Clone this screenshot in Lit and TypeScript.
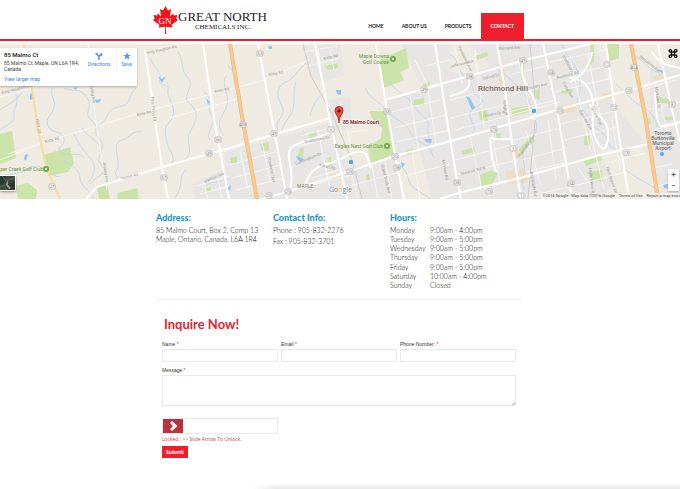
import { LitElement, html, svg, css } from "lit";
import { customElement } from "lit/decorators.js";

type Label = [x: number, y: number, angle: number, text: string];
type Shield = [x: number, y: number, text: string];

const URBAN = [
  "M302 46 340 44 344 76 322 82 308 74Z",
  "M225 152 275 138 330 122 348 168 395 158 402 199 225 199Z",
  "M327 100 350 96 352 128 334 132Z",
  "M385 100 455 82 455 142 396 156Z",
  "M400 44 600 44 616 108 648 145 648 160 628 168 600 199 402 199 396 156 455 142 450 84 420 82Z",
  "M192 184 230 166 230 199 196 199Z",
  "M650 70 680 62 680 199 656 199 648 140Z",
];
const RURAL = [
  "M596 44 630 44 642 100 612 96Z",
  "M600 150 646 146 655 199 618 199Z",
  "M395 160 420 152 432 199 404 199Z",
  "M450 44 470 44 490 66 470 74 450 72Z",
];
const SAND = [
  "M497 64 503 63 506 86 500 88Z",
  "M556 106 578 102 574 112 554 114Z",
  "M505 172 524 168 528 182 508 184Z",
  "M653 76 663 74 664 80 654 81Z",
  "M602 94 614 92 614 98 602 99Z",
  "M510 150 518 148 520 158 513 158Z",
  "M329 175 337 174 338 179 331 180Z",
];
const PARKS = [
  "M0 134 12 131 16 158 0 164Z",
  "M44 155 70 147 74 164 68 172 48 176Z",
  "M97 187 107 184 110 199 99 199Z",
  "M118 193 137 188 139 199 117 199Z",
  "M16 186 28 183 37 190 36 199 18 199Z",
  "M379 60 406 48 409 68 400 72 404 80 384 88Z",
  "M369 111 387 111 394 154 371 164 368 147 381 138 382 128 374 122Z",
  "M606 44 619 44 619 58 608 62Z",
  "M480 175 492 170 498 174 492 184 482 190Z",
  "M530 136 536 140 526 148 522 156 519 150Z",
  "M511 108 528 106 529 112 513 116Z",
  "M478 112 487 110 488 121 480 120Z",
  "M535 91 540 89 539 101 536 98Z",
  "M583 161 600 155 602 160 586 166Z",
  "M584 136 590 136 590 146 584 145Z",
  "M587 172 602 170 603 182 592 180Z",
  "M656 96 671 100 670 104 657 102Z",
  "M664 117 674 116 673 120 665 120Z",
  "M300 148 304 147 303 158 297 157Z",
  "M308 134 316 131 317 136 309 137Z",
  "M260 144 269 142 269 150 262 151Z",
  "M230 158 237 156 237 164 231 163Z",
  "M325 66 338 63 338 68 328 70Z",
  "M327 158 331 157 332 166 328 165Z",
  "M413 100 424 98 424 105 415 105Z",
  "M423 84 430 82 430 90 425 90Z",
  "M405 151 413 148 413 154 407 155Z",
  "M366 175 369 174 370 180 366 180Z",
  "M206 188 211 187 211 192 206 193Z",
  "M461 151 474 147 475 152 463 155Z",
  "M496 133 502 133 500 139 496 137Z",
  "M590 46 594 44 594 62 584 72 585 67 591 61Z",
  "M520 64 524 64 524 80 521 80Z",
  "M475 56 487 52 488 56 477 60Z",
  "M560 90 572 88 573 92 562 94Z",
  "M644 120 650 118 651 124 645 125Z",
];
const STREAMS = [
  "M52 88C50 96 56 100 54 108S44 118 48 126 62 130 64 138 56 146 60 152 80 150 84 158",
  "M0 110C8 104 16 102 22 92M16 94C20 104 12 110 14 116S4 126 0 130",
  "M64 88C72 92 78 88 84 94S90 104 88 112 98 122 96 130 104 138 102 148 96 158 102 166 96 176 90 184",
  "M136 88C128 94 132 104 122 106S110 110 106 118 98 122 97 130",
  "M82 128C86 136 94 138 100 146M74 134C78 142 84 152 90 158S96 176 88 182",
  "M141 132C132 130 130 138 122 140S116 150 118 160 112 172 118 178",
  "M150 58C154 68 162 72 160 80S170 82 168 90 178 108 172 118 164 124 166 138 176 154 172 164",
  "M178 52C184 60 180 70 188 78S180 96 190 104 196 122 190 132 196 152 184 160",
  "M204 92C214 98 206 108 212 116S204 132 210 140",
  "M226 76C220 86 232 96 226 108S216 124 224 136M228 66C238 72 232 86 240 96",
  "M310 60C300 66 296 78 286 82S276 96 282 106 272 122 278 130",
  "M296 82C292 92 296 104 292 112S284 122 282 130M326 92C318 96 312 106 310 116",
  "M366 88C368 98 378 100 384 108S396 118 404 124 408 136 420 142 430 150 434 158",
  "M388 82C398 92 410 98 416 108S430 118 428 128 436 142 426 146",
  "M450 54C460 60 456 70 466 78S470 92 480 98 468 106 470 116 478 126 472 134",
  "M498 70C508 76 516 84 524 94S530 106 534 116 538 130 530 142 522 152 524 164 520 178 524 190",
  "M562 44C566 56 572 60 576 68S582 90 578 98 586 110 590 120 604 130 608 142 626 150 634 158",
  "M616 84C626 92 632 102 644 108S656 126 660 130M630 52C644 60 648 70 662 74",
  "M626 170C634 176 640 180 648 184S658 192 662 199M0 178C8 172 18 176 30 168S52 180 60 176",
  "M400 166C410 172 406 182 414 188S424 194 430 199M62 160C72 166 80 170 80 178S90 190 94 199",
  "M186 170C178 176 184 188 174 199M226 178C220 184 212 180 206 186",
];
const PONDS = [
  "M158 76 162 79 166 76 162 83Z",
  "M336 90 341 90 341 95 337 94Z",
  "M30 94 33 93 33 99 30 100Z",
  "M73 88 77 87 76 90Z",
  "M95 100 101 99 100 102 96 103Z",
  "M466 96 470 98 475 108 472 110Z",
  "M296 156 304 159 301 162 298 160Z",
  "M424 139 432 139 431 143 426 142Z",
  "M206 98 210 102 208 105Z",
  "M268 46 272 46 272 49 269 49Z",
  "M228 186 231 185 230 191 228 190Z",
  "M658 70 665 70 664 74Z",
  "M663 184 668 184 668 188 664 188Z",
  "M25 155 28 154 26 161 24 159Z",
  "M401 162 405 164 402 168Z",
];
const LANES = [
  "M0 97C40 86 100 66 145 52L178 44M0 160 45 142 140 113 258 82 310 60",
  "M88 44 92 88 97 130 107 190M170 118 240 98M0 60 24 54M45 142 8 154",
  "M303 52 338 46M308 66 340 58M318 48 322 78M330 50 334 70",
  "M230 165 275 152M232 178 280 165M236 190 284 178M240 150 248 190M262 142 270 180",
  "M300 136 330 128M296 146 334 138M312 178 345 168M318 130 330 190M308 186 352 175",
  "M352 175 358 199M372 165 378 199M350 186 400 172M385 160 392 199M412 152 420 199M404 176 450 164",
  "M392 112 440 100M394 128 446 115M410 94 418 148M428 90 436 144M396 142 450 130",
  "M415 60 430 90M425 66 450 60M455 48 462 84M475 50 484 128M450 100 505 86M450 118 508 104M455 130 560 102",
  "M455 160 515 144M458 174 518 160M470 136 482 190M492 130 500 184M506 96 550 84M508 112 556 100",
  "M512 74 546 66M518 58 532 120M526 130 540 184M514 140 560 128M522 160 566 148M526 172 568 162M548 120 556 180",
  "M550 62 606 50M553 78 608 66M555 92 612 78M570 56 590 150M588 54 600 118M560 124 618 110M564 140 622 126",
  "M578 168 600 199M574 186 626 172M590 130 604 190M612 120 620 170M610 162 645 153M530 196 572 186",
  "M640 90 676 80M648 110 680 102M652 130 680 124M655 84 668 134M654 168 672 164M658 186 680 180",
  "M196 186 230 176M200 194 230 186M204 182 208 199M218 178 222 199M350 132 368 130M340 102 352 150",
];
const ROADS = [
  "M145 50 155 120 162 167 168 199",
  "M203 44 215 125 220 150 229 199",
  "M86 199 97 187 110 183 162 167 230 148 275 134 330 118",
  "M258 44 275 135 287 199",
  "M315 44 331 125 347 199",
  "M376 44 387 110 395 155 404 199",
  "M385 100 455 80 525 60 590 44",
  "M262 199 290 191 350 171 395 156 455 140 560 109 630 90 680 75",
  "M435 44 447 120 457 180 461 199",
  "M497 44 505 90 513 150 521 199",
  "M543 44 557 110 572 199",
  "M606 44 615 110 629 199",
  "M658 44 672 110 680 142",
  "M440 199 458 193 520 178 600 155 648 144",
  "M450 96C468 92 472 86 468 78M523 60C518 80 532 90 535 102S532 116 535 120",
  "M305 189C306 174 316 166 330 163S356 146 366 154L371 168M290 190C296 170 284 156 291 148S316 140 330 132",
  "M570 78C588 78 594 96 593 110S592 136 600 146 610 132 606 124 592 112 590 104",
  "M490 138 492 158 496 172M490 138C502 142 506 136 513 140M484 186 490 196",
  "M592 52C590 66 582 76 570 82M652 52C660 66 672 66 680 68M655 92C656 110 656 128 664 126L680 122",
];
const STREETS: Label[] = [
  [147, 54, -12, "King Vaughan Rd"],
  [2, 94, -14, "King Vaughan Rd"],
  [45, 143, -14, "Kirby Rd"],
  [137, 116, -12, "Kirby Rd"],
  [215, 93, -12, "Kirby Rd"],
  [269, 76, -10, "Kirby Rd"],
  [324, 60, -14, "Kirby Rd"],
  [121, 180, -14, "Teston Rd"],
  [151, 97, 84, "Pine Valley Dr"],
  [90, 84, 82, "Kipling Ave"],
  [103, 163, 82, "Kipling Ave"],
  [205, 183, -24, "Stanton Ave"],
  [305, 143, -10, "Drummond Dr"],
  [296, 165, -22, "Cunningham Dr"],
  [319, 166, 14, "Killian Rd"],
  [268, 157, 80, "Cranberry Trail"],
  [381, 165, 76, "Grand Trunk Ave"],
  [442, 160, 80, "McVean Rd"],
  [450, 68, -14, "Jefferson Ave"],
  [458, 47, 64, "Pemberton Ave"],
  [499, 50, -4, "Bernard Ave"],
  [483, 80, -14, "Oxford St"],
  [528, 90, -14, "Crosby Ave"],
  [557, 79, -14, "Redstone Rd"],
  [485, 117, -10, "Centre St W"],
  [503, 100, 82, "Yonge St"],
  [562, 83, 58, "Cedar Ave"],
  [579, 111, 60, "Bayview Ave"],
  [591, 107, 64, "Spruce Trail"],
  [519, 158, -54, "Observatory Ln"],
  [461, 175, -14, "Weldrick Rd W"],
  [530, 172, 80, "Red Maple Rd"],
  [589, 168, 84, "Leslie Green Rd"],
  [606, 167, 72, "West Beaver Rd"],
  [639, 57, 38, "Woodbine Ave"],
  [655, 87, 82, "Markland St"],
  [562, 56, 60, "Shaftsbury"],
];
const SHIELDS: Shield[] = [
  [52, 186, "27"], [164, 177, "57"], [209, 153, "49"], [218, 139, "56"], [243, 124, "400"],
  [260, 53, "53"], [274, 133, "49"], [331, 129, "6"], [350, 171, "25"],
  [288, 191, "25"], [387, 111, "53"], [424, 89, "49"], [395, 156, "25"], [397, 167, "38"],
  [470, 76, "38"], [523, 60, "49"], [551, 72, "34"], [560, 110, "25"],
  [494, 129, "25"], [513, 148, "1"], [607, 64, "12"], [614, 107, "12"], [629, 90, "25"],
  [634, 67, "404"], [672, 104, "8"], [626, 152, "73"], [571, 183, "34"], [489, 191, "73"],
  [457, 182, "38"], [521, 195, "1"], [269, 195, "25"],
];

const paths = (list: string[], cls: string) => list.map((d) => svg`<path class=${cls} d=${d}></path>`);

@customElement("area-map")
class AreaMap extends LitElement {
  static styles = css`
    :host { display: block; position: relative; height: 155px; overflow: hidden; background: #efebe2; font-family: Roboto, "Liberation Sans", sans-serif; color: #333; }
    .canvas { display: block; width: 100%; height: 100%; }
    .urban { fill: #e7e6e4; }
    .rural { fill: #efebe2; }
    .sand { fill: #f2dcc0; }
    .park { fill: #cbe3a9; }
    .pond { fill: #93c2f6; }
    .stream { fill: none; stroke: #b9d3ee; stroke-width: 1; opacity: 0.8; }
    .lane { fill: none; stroke: #fbfaf7; stroke-width: 1; opacity: 0.75; }
    .road { fill: none; stroke: #fff; stroke-width: 2; stroke-linejoin: round; }
    .rail { fill: none; stroke: #cfccc6; stroke-width: 1; }
    .hwy-edge { fill: none; stroke: #f0b878; stroke-width: 4; }
    .hwy { fill: none; stroke: #f8c98f; stroke-width: 3; }
    .route { fill: none; stroke: #fadb9c; stroke-width: 2; }
    .street { font-size: 4px; fill: #9b9a96; }
    .shield { fill: #fff; stroke: #bbb; stroke-width: 1; }
    .num { font-size: 4px; fill: #777; text-anchor: middle; }
    .golf { font-size: 5px; fill: #5f9a3c; text-anchor: end; }
    .dot { fill: #71a94e; }
    .hole { fill: #fff; }
    .town { font-size: 8px; font-weight: 500; fill: #7b6c50; }
    .village { font-size: 5px; fill: #8a7654; }
    .airport { font-size: 5px; fill: #555; text-anchor: middle; }
    .stop { fill: #4aa8ea; }
    .place { font-size: 5px; font-weight: 700; fill: #8c2226; stroke: #fff; stroke-width: 1; paint-order: stroke; }
    .pin { fill: #ea4a3f; stroke: #b5312a; stroke-width: 1; }
    .pin-eye { fill: #5e120e; }
    .google { font-size: 7px; font-family: "Open Sans", sans-serif; stroke: #fff; stroke-width: 1; paint-order: stroke; }
    .b { fill: #4285f4; } .r { fill: #ea4335; } .y { fill: #fbbc05; } .g { fill: #34a853; }
    a { color: #3a7bdc; text-decoration: none; }
    .card { position: absolute; left: 0; top: 4px; width: 137px; height: 38px; box-sizing: border-box; padding: 3px 1px 3px 4px; display: flex; background: #fff; box-shadow: 0 1px 2px #0004; font-size: 5px; line-height: 6px; }
    .where { flex: 1; display: flex; flex-direction: column; align-items: flex-start; }
    .where h2 { margin: 0 0 1px; font-size: 6px; line-height: 8px; font-weight: 500; color: #111; }
    .where p { margin: 0 0 4px; color: #444; white-space: nowrap; }
    .action { display: flex; flex-direction: column; align-items: center; gap: 1px; height: 20px; padding-top: 1px; }
    .directions { width: 24px; padding-right: 5px; }
    .save { width: 19px; border-left: 1px solid #eee; }
    .glyph { width: 8px; height: 8px; }
    button { font: inherit; border: 0; padding: 0; background: #fff; }
    .sat { position: absolute; left: 0; bottom: 8px; width: 16px; height: 16px; border: 1px solid #fff; border-left: 0; box-shadow: 0 1px 2px #0006; }
    .sat svg, .full svg { display: block; width: 100%; height: 100%; }
    .full { position: absolute; right: 2px; top: 5px; width: 10px; height: 9px; background: none; }
    .zoom { position: absolute; right: 1px; bottom: 8px; width: 11px; display: flex; flex-direction: column; background: #fff; box-shadow: 0 1px 2px #0004; }
    .zoom button { height: 11px; font-size: 8px; line-height: 11px; font-weight: 500; color: #555; }
    .legal { position: absolute; right: 0; bottom: 0; display: flex; gap: 4px; padding-left: 2px; background: #f5f3eecc; font-size: 4px; line-height: 6px; color: #444; white-space: nowrap; }
    .legal a { color: #444; }
  `;

  render() {
    return html`
      <svg class="canvas" viewBox="0 44 680 155" preserveAspectRatio="xMidYMid slice" role="img" aria-label="Map of 85 Malmo Court">
        ${paths(URBAN, "urban")} ${paths(RURAL, "rural")} ${paths(SAND, "sand")} ${paths(PARKS, "park")}
        ${paths(STREAMS, "stream")} ${paths(PONDS, "pond")} ${paths(LANES, "lane")}
        <path class="rail" d="M303 44 311 76 330 110 352 160 362 199M530 44 536 110 528 199"></path>
        ${paths(ROADS, "road")}
        <path class="route" d="M24 44 32 88 38 130 46 166 60 199"></path>
        <path class="hwy-edge" d="M230 44 243 122 257 199M631 44 645 115 658 199"></path>
        <path class="hwy" d="M230 44 243 122 257 199M631 44 645 115 658 199"></path>
        ${STREETS.map(([x, y, a, t]) => svg`<text class="street" transform="translate(${x} ${y}) rotate(${a})">${t}</text>`)}
        <text class="street" transform="translate(36 119) rotate(82)">HWY 27</text>
        ${SHIELDS.map(([x, y, t]) => svg`<rect class="shield" x=${x - 3} y=${y - 2} width="6" height="5" rx="1"></rect><text class="num" x=${x} y=${y + 2}>${t}</text>`)}
        <text class="golf" x="389" y="58">Maple Downs</text>
        <text class="golf" x="389" y="64">Golf Course</text>
        <text class="golf" x="383" y="148">Eagles Nest Golf Club</text>
        <text class="golf" x="43" y="171">per Creek Golf Club</text>
        ${[[393, 59], [387, 146], [46, 169]].map(([x, y]) => svg`<circle class="dot" cx=${x} cy=${y} r="3"></circle><circle class="hole" cx=${x} cy=${y} r="1"></circle>`)}
        <text class="town" x="478" y="91">Richmond Hill</text>
        <text class="village" x="297" y="188">MAPLE</text>
        <rect class="stop" x="349" y="160" width="4" height="4" rx="1"></rect>
        <rect class="stop" x="532" y="109" width="4" height="4" rx="1"></rect>
        <circle class="stop" cx="662" cy="154" r="2"></circle>
        <text class="airport" x="663" y="135">Toronto</text>
        <text class="airport" x="663" y="140">Buttonville</text>
        <text class="airport" x="663" y="145">Municipal</text>
        <text class="airport" x="663" y="150">Airport</text>
        <path class="pin" d="M339 121C338.500 116 335 114 335 110.500A4 4 0 0 1 343 110.500C343 114 339.500 116 339 121Z"></path>
        <circle class="pin-eye" cx="339" cy="111" r="1.500"></circle>
        <circle class="pin" cx="339" cy="122" r="0.500"></circle>
        <text class="place" x="343" y="124">85 Malmo Court</text>
        <text class="google" x="329" y="192"><tspan class="b">G</tspan><tspan class="r">o</tspan><tspan class="y">o</tspan><tspan class="b">g</tspan><tspan class="g">l</tspan><tspan class="r">e</tspan></text>
      </svg>
      <section class="card">
        <div class="where">
          <h2>85 Malmo Ct</h2>
          <p>85 Malmo Ct, Maple, ON L6A 1R4,<br />Canada</p>
          <a href="#map">View larger map</a>
        </div>
        <a class="action directions" href="#directions">
          <svg class="glyph" viewBox="0 0 8 8" fill="none" stroke="#5b96e4" stroke-width="1.600"><path d="M4 8V4.500L1.500 2M4 5C4 3.200 5 2.700 6 2.700"></path><path d="M5.500 .5 8 2.700 5.500 4.800Z" fill="#5b96e4" stroke="none"></path><path d="M.5 .8H3.200L.7 3.300Z" fill="#5b96e4" stroke="none"></path></svg>
          Directions
        </a>
        <a class="action save" href="#save">
          <svg class="glyph" viewBox="0 0 8 8" fill="#5b96e4"><path d="M4 0 5 2.900 8 3 5.600 4.800 6.500 7.800 4 6 1.500 7.800 2.400 4.800 0 3 3 2.900Z"></path></svg>
          Save
        </a>
      </section>
      <button class="sat" aria-label="Satellite view">
        <svg viewBox="0 0 15 14" preserveAspectRatio="none"><path fill="#3d4a3c" d="M0 0H15V14H0Z"></path><path fill="#2b3a31" d="M0 0H6L4 7 0 9ZM9 8 15 5V14H7Z"></path><path fill="#a79f86" d="M7 5 8 6 8 9 11 12 9 13 6 9Z"></path><path fill="none" stroke="#5d6a58" d="M2 0 6 5 15 2M0 11 5 9"></path></svg>
      </button>
      <button class="full" aria-label="Full screen">
        <svg viewBox="0 0 10 9" fill="none" stroke="#111" stroke-width="1.300"><path d="M3.500 3H2.300A1.200 1.200 0 1 1 3.500 1.800V7.200A1.200 1.200 0 1 1 2.300 6H7.700A1.200 1.200 0 1 1 6.500 7.200V1.800A1.200 1.200 0 1 1 7.700 3Z"></path></svg>
      </button>
      <div class="zoom"><button aria-label="Zoom in">+</button><button aria-label="Zoom out">−</button></div>
      <div class="legal"><span>©2016 Google - Map data ©2016 Google</span><a href="#terms">Terms of Use</a><a href="#report">Report a map error</a></div>
    `;
  }
}

const HOURS = [
  ["Monday", "9:00am - 4:00pm"],
  ["Tuesday", "9:00am - 5:00pm"],
  ["Wednesday", "9:00am - 5:00pm"],
  ["Thursday", "9:00am - 5:00pm"],
  ["Friday", "9:00am - 5:00pm"],
  ["Saturday", "10:00am - 4:00pm"],
  ["Sunday", "Closed"],
];

@customElement("app-root")
class AppRoot extends LitElement {
  static styles = css`
    :host { display: flex; flex-direction: column; min-height: 100vh; background: #fff; font-family: Lato, sans-serif; font-size: 7px; line-height: 9px; color: #000; }
    a { text-decoration: none; color: inherit; }
    .wrap { box-sizing: border-box; width: 100%; max-width: 374px; margin: 0 auto; }
    header { border-bottom: 2px solid #ed1f2d; margin-bottom: 3px; }
    .bar { display: flex; justify-content: space-between; align-items: flex-end; height: 39px; padding-right: 3px; }
    .logo { display: flex; align-self: flex-start; margin-top: 6px; }
    .leaf { width: 25px; height: 28px; }
    .gn { font: 9px "Liberation Serif", serif; fill: #fff; text-anchor: middle; }
    .brand { display: flex; flex-direction: column; align-items: flex-end; padding-top: 4px; font-family: "Liberation Serif", serif; color: #222; }
    .brand b { font-size: 13px; line-height: 13px; font-weight: 400; }
    .brand span { font-size: 7px; line-height: 8px; padding-right: 16px; }
    nav { display: flex; height: 26px; }
    nav a { display: flex; align-items: center; padding: 0 9px; font-size: 5px; font-weight: 700; color: #222; }
    nav a.current { padding: 0 10px; background: #ed1f2d; color: #fff; }
    .info { display: grid; grid-template-columns: repeat(3, 1fr); margin: 13px 5px 0 3px; padding-right: 15px; height: 87px; border-bottom: 1px solid #f3f3f3; font-weight: 300; }
    h3 { margin: 0 0 2px; font-size: 9px; line-height: 12px; font-weight: 900; color: #1c94c9; }
    .info p { margin: 0 0 2px; white-space: nowrap; }
    table { border-collapse: collapse; height: 64px; line-height: 9px; }
    td, th { padding: 0; font-weight: 300; text-align: left; white-space: nowrap; }
    th { width: 40px; }
    form { display: flex; flex-direction: column; padding: 16px 11px 0 9px; font-family: "Liberation Sans", sans-serif; }
    h1 { margin: 0 2px 8px; font: 700 13px/16px Lato, sans-serif; color: #e8212e; }
    .fields { display: grid; grid-template-columns: repeat(3, 1fr); gap: 3px; margin-bottom: 4px; }
    label { display: flex; flex-direction: column; gap: 1px; font-size: 5px; line-height: 8px; color: #333; }
    i { font-style: normal; color: #e8212e; }
    input, textarea { display: block; box-sizing: border-box; width: 100%; margin: 0; border: 1px solid #e9e9e9; background: #fff; border-radius: 0; font: 6px "Liberation Sans", sans-serif; padding: 1px 3px; outline: 0; }
    .text { height: 13px; }
    textarea { height: 31px; resize: vertical; }
    textarea::-webkit-resizer { background: linear-gradient(135deg, #fff 88%, #ccc 88%); }
    .lock { appearance: none; width: 116px; height: 16px; margin: 12px 0 1px; padding: 0; }
    .lock::-webkit-slider-thumb { appearance: none; width: 20px; height: 14px; border: 0; border-radius: 0; background: #b9333f url("data:image/svg+xml,%3Csvg xmlns='http://www.w3.org/2000/svg' viewBox='0 0 20 14'%3E%3Cpath d='M7 4 9 2 14.500 7 9 12 7 10 10 7Z' fill='white'/%3E%3C/svg%3E") center / 20px 14px no-repeat; }
    .note { margin: 0 0 3px; font: 5px/8px "Open Sans", sans-serif; color: #c0404a; }
    .submit { align-self: flex-start; width: 26px; height: 12px; padding: 0; border: 0; background: #ed1f2d; color: #fff; font: 700 5px "Open Sans", sans-serif; }
    footer { height: 6px; margin: auto 0 0 auto; width: 63%; background: linear-gradient(to right, #fff, #fff0 24px), linear-gradient(#fff, #e8e8e8); }
  `;

  render() {
    return html`
      <header>
        <div class="wrap bar">
          <a class="logo" href="#home" aria-label="Great North Chemicals Inc.">
            <svg class="leaf" viewBox="0 0 25 28"><path fill="#f0141e" d="M12.500 0 15 4.500 18 3 17 10.500 20 7.500 21 9.500 24.500 9 23.300 12.500 25 14 18.500 19 19.500 21.500 13 20.800 13.200 28H12L12.200 20.800 5.500 21.500 6.500 19 0 14 1.700 12.500.5 9 4 9.500 5 7.500 8 10.500 7 3 10 4.500Z"></path><text class="gn" x="12" y="18">GN</text></svg>
            <span class="brand"><b>GREAT NORTH</b><span>CHEMICALS INC.</span></span>
          </a>
          <nav>
            <a href="#home">HOME</a><a href="#about">ABOUT US</a><a href="#products">PRODUCTS</a><a class="current" href="#contact">CONTACT</a>
          </nav>
        </div>
      </header>
      <area-map></area-map>
      <main class="wrap">
        <div class="info">
          <section><h3>Address:</h3><p>85 Malmo Court, Box 2, Comp 13<br />Maple, Ontario, Canada, L6A 1R4</p></section>
          <section><h3>Contact Info:</h3><p>Phone : 905-832-2276</p><p>Fax : 905-832-3701</p></section>
          <section><h3>Hours:</h3>
            <table><tbody>${HOURS.map(([d, t]) => html`<tr><th scope="row">${d}</th><td>${t}</td></tr>`)}</tbody></table>
          </section>
        </div>
        <form>
          <h1>Inquire Now!</h1>
          <div class="fields">
            <label><span>Name <i>*</i></span><input class="text" type="text" name="name" /></label>
            <label><span>Email <i>*</i></span><input class="text" type="email" name="email" /></label>
            <label><span>Phone Number: <i>*</i></span><input class="text" type="tel" name="phone" /></label>
          </div>
          <label><span>Message <i>*</i></span><textarea name="message"></textarea></label>
          <input class="lock" type="range" min="0" max="100" value="0" aria-label="Slide arrow to unlock" />
          <p class="note">Locked : &gt;&gt; Slide Arrow To Unlock.</p>
          <button class="submit" type="button">Submit</button>
        </form>
      </main>
      <footer></footer>
    `;
  }
}
